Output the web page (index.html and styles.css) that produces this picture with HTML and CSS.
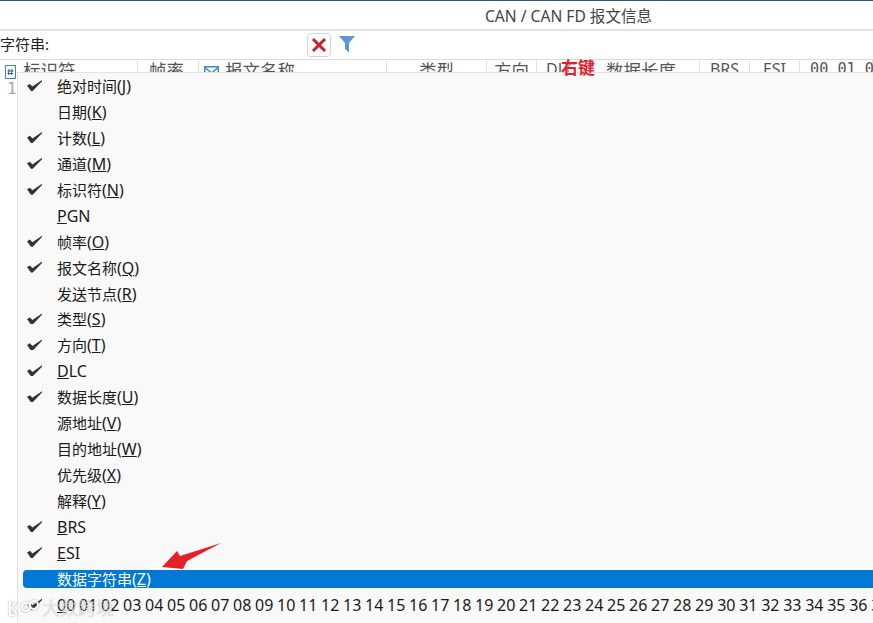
FILE: index.html
```html
<!DOCTYPE html>
<html lang="zh-CN">
<head>
    <meta charset="UTF-8">
    <meta name="viewport" content="width=device-width, initial-scale=1.0">
    <title>CAN / CAN FD 报文信息</title>
    <link rel="stylesheet" href="styles.css">
</head>
<body>
    <div class="window">
        <div class="title-bar">CAN / CAN FD 报文信息</div>

        <div class="filter-row">
            <span class="filter-label">字符串:</span>
            <button class="clear-btn" type="button" aria-label="清除">
                <svg width="16" height="16" viewBox="0 0 16 16"><path d="M2 2 L14 14 M14 2 L2 14" stroke="#c8232c" stroke-width="3" fill="none"/></svg>
            </button>
            <svg class="funnel" width="18" height="18" viewBox="0 0 18 18"><path d="M1 1 H17 L11 8 V17.5 L7 14 V8 Z" fill="#5b9bd5"/></svg>
        </div>

        <div class="table-header">
            <div class="col col-id">
                <svg class="col-icon" width="11" height="14" viewBox="0 0 11 14"><rect x="0.5" y="0.5" width="10" height="13" fill="#fff" stroke="#3f86c6"/><path d="M4 4 L3.5 10 M7 4 L6.5 10 M2.5 6 H8.5 M2.5 8.5 H8" stroke="#2a5f95" stroke-width="1"/></svg>
                <span>标识符</span>
            </div>
            <div class="col col-rate">帧率</div>
            <div class="col col-name">
                <svg class="col-icon" width="15" height="12" viewBox="0 0 15 12"><rect x="0.75" y="0.75" width="13.5" height="10.5" fill="#fff" stroke="#3f86c6" stroke-width="1.5"/><path d="M1 1.5 L7.5 7 L14 1.5" stroke="#3f86c6" stroke-width="1.5" fill="none"/></svg>
                <span>报文名称</span>
            </div>
            <div class="col col-type">类型</div>
            <div class="col col-dir">方向</div>
            <div class="col col-dlc">DLC</div>
            <div class="col col-len">数据长度</div>
            <div class="col col-brs">BRS</div>
            <div class="col col-esi">ESI</div>
            <div class="col col-data">00 01 02</div>
        </div>

        <div class="table-body">
            <div class="row-num">1</div>
        </div>

        <ul class="context-menu">
            <li class="menu-item checked">绝对时间<span class="key">(<u>J</u>)</span></li>
            <li class="menu-item">日期<span class="key">(<u>K</u>)</span></li>
            <li class="menu-item checked">计数<span class="key">(<u>L</u>)</span></li>
            <li class="menu-item checked">通道<span class="key">(<u>M</u>)</span></li>
            <li class="menu-item checked">标识符<span class="key">(<u>N</u>)</span></li>
            <li class="menu-item"><span class="key"><u>P</u>GN</span></li>
            <li class="menu-item checked">帧率<span class="key">(<u>O</u>)</span></li>
            <li class="menu-item checked">报文名称<span class="key">(<u>Q</u>)</span></li>
            <li class="menu-item">发送节点<span class="key">(<u>R</u>)</span></li>
            <li class="menu-item checked">类型<span class="key">(<u>S</u>)</span></li>
            <li class="menu-item checked">方向<span class="key">(<u>T</u>)</span></li>
            <li class="menu-item checked"><span class="key"><u>D</u>LC</span></li>
            <li class="menu-item checked">数据长度<span class="key">(<u>U</u>)</span></li>
            <li class="menu-item">源地址<span class="key">(<u>V</u>)</span></li>
            <li class="menu-item">目的地址<span class="key">(<u>W</u>)</span></li>
            <li class="menu-item">优先级<span class="key">(<u>X</u>)</span></li>
            <li class="menu-item">解释<span class="key">(<u>Y</u>)</span></li>
            <li class="menu-item checked"><span class="key"><u>B</u>RS</span></li>
            <li class="menu-item checked"><span class="key"><u>E</u>SI</span></li>
            <li class="menu-item active">数据字符串<span class="key">(<u>Z</u>)</span></li>
            <li class="menu-item checked bytes"><u>0</u>0 01 02 03 04 05 06 07 08 09 10 11 12 13 14 15 16 17 18 19 20 21 22 23 24 25 26 27 28 29 30 31 32 33 34 35 36 37</li>
        </ul>

        <span class="note-label">右键</span>
        <svg class="note-arrow" width="62" height="28" viewBox="0 0 62 28"><path d="M1 25 L16 9 L19 14 L60 1 L26 19 L22 27 Z" fill="#e5202b"/></svg>

        <div class="watermark">
            <svg width="32" height="18" viewBox="0 0 32 18"><path d="M2 2 V16 H7 M8 3 L4 9 L9 15 M14 8 a4 4 0 1 1 8 0 a4 4 0 1 1 -8 0 M22 6 a4 4 0 1 1 8 0 a4 4 0 0 1 -8 0" stroke="#fff" stroke-width="2" fill="none"/></svg>
            <span>大数跨境</span>
        </div>
    </div>
</body>
</html>
```

FILE: styles.css
```css
* {
    margin: 0;
    padding: 0;
    box-sizing: border-box;
}

body {
    font-family: "Noto Sans", "Noto Sans CJK SC", sans-serif;
    background: white;
    overflow: hidden;
}

.window {
    position: relative;
    width: 873px;
    height: 623px;
    overflow: hidden;
    border-top: 1px solid #2f5580;
}

.title-bar {
    height: 30px;
    border-bottom: 2px solid #e3e3e3;
    padding-left: 485px;
    font-size: 15.6px;
    line-height: 30px;
    color: #444;
    white-space: nowrap;
}

.filter-row {
    display: flex;
    align-items: center;
    height: 28px;
}

.filter-label {
    width: 307px;
    margin-top: -4px;
    font-size: 15px;
    color: #222;
    white-space: nowrap;
}

.clear-btn {
    display: flex;
    align-items: center;
    justify-content: center;
    width: 24px;
    height: 24px;
    background: white;
    border: 1px solid #d5d5d5;
    border-radius: 4px;
}

.funnel {
    margin-left: 7px;
    margin-top: -2px;
}

.table-header {
    display: flex;
    height: 20px;
    border-top: 1px solid #dcdcdc;
    font-size: 17.5px;
    color: #555;
}

.col {
    display: flex;
    align-items: center;
    justify-content: center;
    gap: 6px;
    height: 100%;
    padding-bottom: 1px;
    border-right: 1px solid #e0e0e0;
    white-space: nowrap;
    overflow: hidden;
    flex-shrink: 0;
}

.col svg {
    margin-top: 5px;
    flex-shrink: 0;
}

.col-id {
    width: 138px;
    justify-content: flex-start;
    padding-left: 5px;
    gap: 7px;
}

.col-rate {
    width: 61px;
    padding-right: 3px;
}

.col-name {
    width: 188px;
    justify-content: flex-start;
    padding-left: 5px;
}

.col-type {
    width: 100px;
}

.col-dir {
    width: 50px;
}

.col-dlc {
    width: 53px;
    font-size: 16px;
    justify-content: flex-start;
    padding-left: 9px;
}

.col-len {
    width: 110px;
    justify-content: flex-start;
    padding-left: 16px;
}

.col-brs {
    width: 50px;
    font-size: 16px;
}

.col-esi {
    width: 50px;
    font-size: 16px;
}

.col-data {
    width: 73px;
    justify-content: flex-start;
    padding-left: 10px;
    font-family: "DejaVu Sans Mono", monospace;
    font-size: 15.2px;
    overflow: visible;
}

.table-body {
    padding: 1px 0 0 7px;
}

.row-num {
    font-family: "DejaVu Sans Mono", monospace;
    font-size: 16px;
    line-height: 18px;
    color: #a8a8a8;
}

.context-menu {
    position: absolute;
    left: 17px;
    top: 71px;
    width: 900px;
    height: 560px;
    padding-top: 1px;
    list-style: none;
    background: #f9f9f9;
    border-top: 1px solid #e2e2e2;
    border-left: 1px solid #e2e2e2;
}

.menu-item {
    position: relative;
    height: 25.95px;
    padding-left: 39px;
    font-size: 15px;
    line-height: 25px;
    color: #1a1a1a;
    white-space: nowrap;
}

.key {
    font-size: 16px;
}

.menu-item.checked::before {
    content: "";
    position: absolute;
    left: 9px;
    top: 6px;
    width: 15px;
    height: 11px;
    background: #333;
    clip-path: polygon(0 50%, 20% 36%, 36% 60%, 100% 0, 100% 12%, 38% 100%, 26% 100%);
}

.menu-item.active {
    isolation: isolate;
    color: white;
}

.menu-item.active::after {
    content: "";
    position: absolute;
    left: 5px;
    right: 0;
    top: 3px;
    height: 18px;
    background: #0078d4;
    border-radius: 4px 0 0 4px;
    z-index: -1;
}

.menu-item.bytes {
    font-size: 16px;
    word-spacing: -0.46px;
}

.note-label {
    position: absolute;
    left: 561px;
    top: 55px;
    font-size: 17px;
    font-weight: 700;
    line-height: 24px;
    color: #e5202b;
    text-shadow: 0 0 2px white;
}

.note-arrow {
    position: absolute;
    left: 161px;
    top: 541px;
}

.watermark {
    position: absolute;
    left: 8px;
    top: 596px;
    display: flex;
    align-items: center;
    gap: 2px;
    font-size: 18px;
    line-height: 22px;
    color: rgba(255, 255, 255, 0.5);
    text-shadow: 0 0 1px rgba(120, 120, 120, 0.45);
}

.watermark svg {
    filter: drop-shadow(0 0 1px rgba(120, 120, 120, 0.6));
}
```
